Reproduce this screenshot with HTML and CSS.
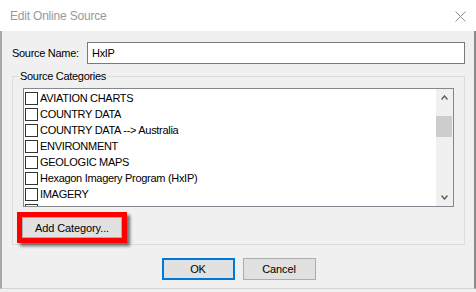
FILE: index.html
```html
<!DOCTYPE html>
<html lang="en">
<head>
    <meta charset="UTF-8">
    <title>Edit Online Source</title>
    <link rel="stylesheet" href="styles.css">
</head>
<body>
    <div class="window">
        <div class="titlebar">
            <span class="title">Edit Online Source</span>
            <svg class="close" width="11" height="11" viewBox="0 0 11 11">
                <path d="M0.5 0.5 L10.5 10.5 M10.5 0.5 L0.5 10.5" stroke="#8c8c8c" stroke-width="1" fill="none"/>
            </svg>
        </div>
        <div class="content">
            <div class="name-row">
                <label class="name-label">Source Name:</label>
                <div class="name-input">HxIP</div>
            </div>

            <fieldset class="categories">
                <legend>Source Categories</legend>
                <div class="listbox">
                    <ul class="items">
                        <li><span class="check"></span>AVIATION CHARTS</li>
                        <li><span class="check"></span>COUNTRY DATA</li>
                        <li><span class="check"></span>COUNTRY DATA --&gt; Australia</li>
                        <li><span class="check"></span>ENVIRONMENT</li>
                        <li><span class="check"></span>GEOLOGIC MAPS</li>
                        <li><span class="check"></span>Hexagon Imagery Program (HxIP)</li>
                        <li><span class="check"></span>IMAGERY</li>
                        <li><span class="check"></span>IMAGERY --&gt; Worldwide</li>
                    </ul>
                    <div class="scrollbar">
                        <div class="scroll-btn">
                            <svg width="7" height="5" viewBox="0 0 7 5"><polyline points="0.5,4.5 3.5,1 6.5,4.5" stroke="#606060" stroke-width="1.5" fill="none"/></svg>
                        </div>
                        <div class="track"><div class="thumb"></div></div>
                        <div class="scroll-btn">
                            <svg width="7" height="5" viewBox="0 0 7 5"><polyline points="0.5,0.5 3.5,4 6.5,0.5" stroke="#606060" stroke-width="1.5" fill="none"/></svg>
                        </div>
                    </div>
                </div>
                <div class="highlight">
                    <button class="btn add-btn">Add Category...</button>
                </div>
            </fieldset>

            <div class="actions">
                <button class="btn ok-btn">OK</button>
                <button class="btn">Cancel</button>
            </div>
        </div>
    </div>
</body>
</html>
```

FILE: styles.css
```css
body {
    margin: 0;
    background: #f0f0f0;
    font-family: 'Liberation Sans', Arial, sans-serif;
    font-size: 11px;
    letter-spacing: -0.3px;
    color: #000;
}
.window {
    width: 476px;
}
.titlebar {
    height: 31px;
    background: #fff;
    display: flex;
    align-items: center;
    justify-content: space-between;
    padding: 0 10px 0 10px;
    box-sizing: border-box;
}
.title {
    font-size: 12px;
    letter-spacing: -0.2px;
    color: #999;
}
.close {
    margin-top: 1px;
}
.content {
    border-left: 2px solid #a8a8a8;
    border-right: 2px solid #8a8a8a;
    border-bottom: 1px solid #d4d4d4;
    padding: 11px 9px 9px 10px;
    height: 258px;
    box-sizing: border-box;
}
.name-row {
    display: flex;
    align-items: center;
}
.name-label {
    width: 75px;
}
.name-input {
    flex: 1;
    height: 22px;
    line-height: 20px;
    box-sizing: border-box;
    border: 1px solid #7a7a7a;
    background: #fff;
    padding-left: 4px;
}
.categories {
    margin: 6px 0 0 0;
    padding: 0 10px 1px 10px;
    border: 1px solid #dcdcdc;
}
.categories legend {
    margin-left: -4px;
    padding: 0 1px;
    line-height: 13px;
}
.listbox {
    margin-top: 5px;
    height: 119px;
    box-sizing: border-box;
    border: 1px solid #828790;
    background: #fff;
    display: flex;
}
.items {
    flex: 1;
    list-style: none;
    margin: 0;
    padding: 1px 0 0 1px;
    overflow: hidden;
}
.items li {
    height: 16px;
    display: flex;
    align-items: center;
    white-space: nowrap;
}
.check {
    width: 13px;
    height: 13px;
    box-sizing: border-box;
    border: 1px solid #333;
    background: #fff;
    margin-right: 2px;
    flex: none;
}
.scrollbar {
    width: 17px;
    background: #f0f0f0;
    display: flex;
    flex-direction: column;
}
.scroll-btn {
    height: 17px;
    display: flex;
    align-items: center;
    justify-content: center;
}
.track {
    flex: 1;
    padding-top: 10px;
}
.thumb {
    height: 21px;
    margin-right: 1px;
    background: #cdcdcd;
}
.highlight {
    width: fit-content;
    margin: 5px 0 0 -6px;
    border: 5px solid #ff0000;
    box-shadow: 3px 3px 3px rgba(0, 0, 0, 0.55);
    display: flex;
}
.btn {
    font-family: 'Liberation Sans', Arial, sans-serif;
    font-size: 11px;
    letter-spacing: -0.1px;
    color: #000;
    background: #e1e1e1;
    border: 1px solid #adadad;
    padding: 0;
    margin: 0;
}
.add-btn {
    width: 100px;
    height: 21px;
}
.actions {
    margin-top: 13px;
    display: flex;
    justify-content: center;
    gap: 8px;
}
.actions .btn {
    width: 73px;
    height: 22px;
}
.ok-btn {
    border-color: #0078d7;
    box-shadow: inset 0 0 0 1px #0078d7;
}
```
